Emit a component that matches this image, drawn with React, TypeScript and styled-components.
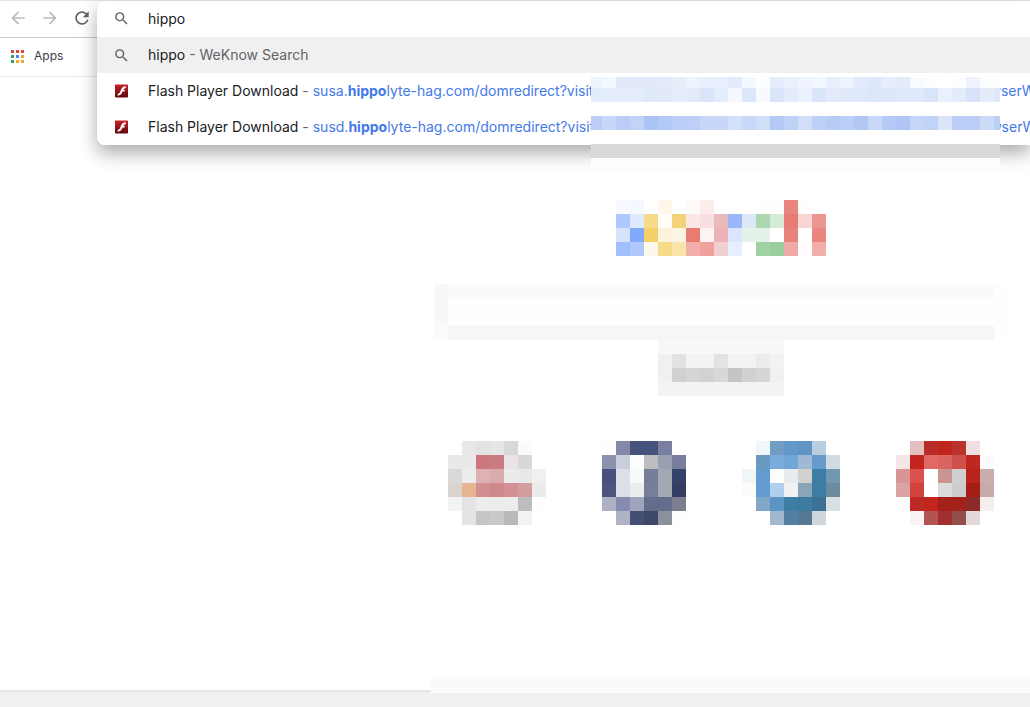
import React, { useState } from "react";
import styled, { createGlobalStyle } from "styled-components";
import { MdArrowBack, MdArrowForward, MdRefresh, MdSearch } from "react-icons/md";

const GlobalStyle = createGlobalStyle`
  *, *::before, *::after { box-sizing: border-box; }
  body {
    margin: 0;
    background: #fff;
    color: #202124;
    font-family: Inter, "Liberation Sans", sans-serif;
    font-size: 14px;
    overflow-x: hidden;
  }
`;

const Page = styled.div`
  display: flex;
  flex-direction: column;
  min-height: 100vh;
`;

const Chrome = styled.header`
  position: relative;
  border-top: 1px solid #e4e4e6;
`;

const Toolbar = styled.nav`
  display: flex;
  align-items: center;
  gap: 12px;
  height: 37px;
  padding: 0 0 2px 8px;
  border-bottom: 1px solid #c9cacb;
`;

const ToolButton = styled.button<{ $active?: boolean }>`
  display: flex;
  padding: 0;
  border: 0;
  background: none;
  color: ${(p) => (p.$active ? "#5f6368" : "#bababa")};
`;

const Bookmarks = styled.div`
  display: flex;
  align-items: center;
  height: 39px;
  padding: 0 0 2px 11px;
  border-bottom: 1px solid #ebebec;
`;

const AppsLink = styled.a`
  display: flex;
  align-items: center;
  gap: 10px;
  color: #3c4043;
  font-size: 12px;
  line-height: 16px;
  text-decoration: none;
`;

const Omnibox = styled.div`
  position: absolute;
  top: 0;
  left: 97px;
  right: 0;
  z-index: 1;
  border-radius: 8px 0 0 8px;
  background: #fff;
  box-shadow: 0 8px 18px rgba(32, 33, 36, 0.38);
`;

const Field = styled.label`
  display: flex;
  align-items: center;
  gap: 18px;
  height: 36px;
  padding: 0 0 2px 16px;
  color: #5f6368;
`;

const FieldInput = styled.input`
  flex: 1;
  min-width: 0;
  padding: 0;
  border: 0;
  outline: 0;
  background: none;
  color: #202124;
  font: inherit;
`;

const Suggestions = styled.ul`
  margin: 0;
  padding: 0;
  list-style: none;
`;

const Suggestion = styled.a<{ $selected?: boolean }>`
  display: flex;
  align-items: center;
  gap: 18px;
  height: 36px;
  padding-left: 16px;
  overflow: hidden;
  border-radius: ${(p) => (p.$selected ? "0" : "0 0 0 8px")};
  background: ${(p) => (p.$selected ? "#f0f0f0" : "#fff")};
  color: #5f6368;
  line-height: 18px;
  text-decoration: none;
  white-space: nowrap;
`;

const IconSlot = styled.span`
  display: flex;
  flex: 0 0 17px;
`;

const Label = styled.span`
  flex: 0 0 443px;
`;

const Title = styled.span`
  color: #202124;
`;

const Url = styled.span`
  color: #4479e8;
  b { font-weight: 700; }
`;

const UrlTail = styled(Url)`
  margin-left: 378px;
`;

const Redaction = styled.div`
  position: absolute;
  top: 76px;
  left: 494px;
`;

const MosaicSvg = styled.svg`
  display: block;
  flex: none;
`;

const Main = styled.main`
  display: flex;
  flex: 1;
  flex-direction: column;
  align-items: center;
  width: 574px;
  margin-left: 434px;
  padding-top: 123px;
`;

const SearchBox = styled.div`
  margin-top: 28px;
`;

const Tiles = styled.div`
  display: flex;
  gap: 56px;
  margin-top: 45px;
`;

const Footer = styled.footer`
  position: relative;
  height: 17px;
  border-top: 2px solid #e6e6e6;
  background: #f0f0f0;
`;

const FooterPatch = styled.div`
  position: absolute;
  top: -13px;
  left: 431px;
  right: 0;
  height: 14px;
  background: #fafafa;
`;

const CELL = 14;

type MosaicProps = { rows: string[]; label: string };

/* Each row is a space separated list of hex colours; "-" leaves a cell empty. */
function Mosaic({ rows, label }: MosaicProps) {
  const grid = rows.map((row) => row.split(" "));
  const width = Math.max(...grid.map((r) => r.length)) * CELL;
  const height = grid.length * CELL;
  return (
    <MosaicSvg width={width} height={height} role="img" aria-label={label} shapeRendering="crispEdges">
      {grid.map((row, y) =>
        row.map((c, x) =>
          c === "-" ? null : (
            <rect key={`${x}-${y}`} x={x * CELL} y={y * CELL} width={CELL} height={CELL} fill={`#${c}`} />
          )
        )
      )}
    </MosaicSvg>
  );
}

const redactedRows = [
  {
    y: 0,
    h: 11,
    colors:
      "eef4fe f4f8ff e1e9fb e1e9fb e1e9fb e4ecfc e6eefc eef3fe e8effd e8effd e3eafc f4f8ff fdfeff e6eefd eaf0fd eef3fe f3f7ff e9effd edf3fe e2eafb dfe8fb e6edfc e4ebfb f8fbff fcfdff ffffff fbfdff eef2fd fcfdff fcfdff",
  },
  {
    y: 11,
    h: 14,
    colors:
      "e3ecfb e4edfb e5ecfb e5ecfb e0e9fa e1e9fa e5ecfb e3ebfb dbe5fa e3edfb f5f8ff dce7fc f8faff dae5f9 e4ecfb ecf1fe dbe5fa e4eafb e0e8fa e0e9fb dde7fa dfe8fa e0e9fb e0e8fb d9e4f8 eaf1fc e4ecfb d8e3f9 e4ecfb dfe8fb",
  },
  {
    y: 39,
    h: 14,
    colors:
      "b9cdf6 c6d7f8 b9cdf7 c2d3f7 abc3f5 b4caf6 bacdf7 bdcff8 c6d7f8 c6d7f9 d3e0f9 c8d8f8 d0dff8 b3caf5 bed1f7 d0def8 bdd0f7 b7ccf5 bbcef7 b1c8f4 c7d8f8 b5caf6 afc6f4 c4d5f7 c0d3f8 dae5fa bacef9 b9cdf6 cbdaf7 bbcef7",
  },
];

function RedactedUrls() {
  return (
    <Redaction>
      <MosaicSvg width={409} height={95} shapeRendering="crispEdges" aria-hidden="true">
        <rect width={409} height={67} fill="#fff" />
        {redactedRows.map((row) =>
          row.colors.split(" ").map((c, i) => (
            <rect
              key={`${row.y}-${i}`}
              x={i === 0 ? 0 : 11 + (i - 1) * CELL}
              y={row.y}
              width={i === 0 ? 11 : CELL}
              height={row.h}
              fill={`#${c}`}
            />
          ))
        )}
        <rect y={67} width={409} height={14} fill="#d9dbda" />
        <rect y={81} width={409} height={14} fill="#fdfdfd" />
      </MosaicSvg>
    </Redaction>
  );
}

const appColors = [
  "#e94335", "#e94335", "#e94335",
  "#35a152", "#4285f4", "#f5a623",
  "#35a152", "#f5a623", "#f5a623",
];

function AppsIcon() {
  return (
    <svg width="13" height="13" shapeRendering="crispEdges" aria-hidden="true">
      {appColors.map((c, i) => (
        <rect key={i} x={(i % 3) * 5} y={Math.floor(i / 3) * 5} width="3" height="3" fill={c} />
      ))}
    </svg>
  );
}

function FlashIcon() {
  return (
    <svg width="16" height="14" viewBox="-1 0 16 14" aria-hidden="true">
      <defs>
        <linearGradient id="flash" x1="0" y1="0" x2="0" y2="1">
          <stop offset="0" stopColor="#c9202a" />
          <stop offset="1" stopColor="#5c080c" />
        </linearGradient>
      </defs>
      <rect x="1" y="0.5" width="13" height="13" rx="0.8" fill="url(#flash)" />
      <path
        d="M11.8 2.200v2c-1.4 0-2 .5-2.5 1.500h1.400v1.800H8.500c-.9 2.500-2 4.100-4.800 4.200v-2c1.800-.2 2.300-1.600 3-3.300C7.600 4 8.800 2.200 11.800 2.200z"
        fill="#fff"
      />
    </svg>
  );
}

const logoRows = [
  "f8faff f5f9ff - fff7ea - fffafa fdecec - - - fefefe fbfefb e9857e fffdfe -",
  "afc8fd dfe9ff f6da89 fffdf6 f3d377 fbe8e6 f9e0e0 ebbabd 9ab7fb dce8f8 acd7b2 d6ead8 e57c75 f9d5d4 ec9690",
  "d5e3fc 80aafc f4d069 fdf3dc fdf4e3 e87c72 fff4f4 ebb3b6 dbe5ff e5f2e7 e5f2e7 fff e9827b fff ea857f",
  "a1bffd afc9fd fdf8ed f6dc89 f9e4aa f2aeab efa19c f0d0d0 e7eeff - 9fd1a5 9ccf9f efaaa8 fffdfe f1aeaa",
];

const wide = (first: string, rest: string, last: string) => [first, ...Array(39).fill(rest), last].join(" ");
const searchRows = [
  wide("f8f8f8", "fafafa", "fefefe"),
  wide("f8f8f8", "fefefe", "fdfdfd"),
  wide("f8f8f8", "fefefe", "fdfdfd"),
  wide("fbfbfb", "f6f6f6", "fefefe"),
];

const buttonRows = [
  "f8f8f8 f8f8f8 f8f8f8 f8f8f8 f8f8f8 f8f8f8 f8f8f8 f8f8f8 f8f8f8",
  "f0f0f0 e2e2e2 f3f3f3 f3f3f3 e3e3e3 f3f3f3 f3f3f3 ececec f2f2f2",
  "f0f0f0 d1d1d1 d5d5d5 d2d2d2 d8d8d8 c5c5c5 d1d1d1 d6d6d6 f0f0f0",
  "f3f3f3 f3f3f3 f3f3f3 f3f3f3 f3f3f3 f3f3f3 f3f3f3 f3f3f3 f3f3f3",
];

const tiles = [
  {
    label: "Shortcut 1",
    rows: [
      "- e8e8e8 e3e3e3 e6e6e6 d8d8d8 fafafa -",
      "e9e9e9 e9e9e9 cb777d ca7b80 e9e3e5 d8d8d8 -",
      "d9d9d9 ececec dcb2b5 d9abad ebebeb e9e9e9 f0f0f0",
      "dbd3ce e7b391 d28e91 ce888b d59094 d39c9f ebebeb",
      "f3f3f3 e4e4e4 ececec ececec ececec bdbdbd fefefe",
      "- e4e4e4 c6c6c6 c9c9c9 b9b9b9 f2f2f2 -",
    ],
  },
  {
    label: "Shortcut 2",
    rows: [
      "fefefe 8288a6 48527f 48527f 787f9f -",
      "8c91ae cacddc fdfdfe bcbdc1 9b9fb3 777d9c",
      "48517e dddfe8 f7f9fa 757d98 a4a8b3 354269",
      "4d5480 dddfe8 ebedf0 767e98 a4a8b3 333d64",
      "aeb1c4 868caf a0a5bd 646e8b 646e8b 7b7f91",
      "- b0b3c3 454e75 3d4767 8b909c fefefe",
    ],
  },
  {
    label: "Shortcut 3",
    rows: [
      "- f1f6f9 719dc2 6098c8 6094c3 bacddf -",
      "- 6998c0 7aacdd 70a6d7 9fb9d4 669bcc d1dbe4",
      "f0f5f8 629bcf fcfdff e8ecef d1d1d1 3d7ca3 7297b1",
      "f9fbfc 629bcf b0cfec f1f1f1 88a6b6 3d7ca3 6c8b9e",
      "- 80a7c8 5a95c4 3e7ea4 3d7ba1 3b7195 d7dfe3",
      "- - a2b8cf 5280a2 567993 cfd6dc -",
    ],
  },
  {
    label: "Shortcut 4",
    rows: [
      "- e4c0c2 b92d27 c1261d b9342d f1dfe1 -",
      "f4e7e8 c4241e e06965 d96460 d0514b bf2720 fcfafb",
      "d79594 da514d fff c99494 cfcfcf b9231b caaeac",
      "dba4a4 d2433b fff dbdbdb cdcdcd a41e18 c7abab",
      "fdfcfd bd2a23 c1251b a3201b a3201b 8d2b29 f4eeee",
      "- f9f3f4 b35451 a02f2d 934e4b e3d8da -",
    ],
  },
];

const flashHosts = ["susa.", "susd."];

export default function App() {
  const [query, setQuery] = useState("hippo");
  return (
    <Page>
      <GlobalStyle />
      <Chrome>
        <Toolbar aria-label="Navigation">
          <ToolButton aria-label="Back"><MdArrowBack size={20} /></ToolButton>
          <ToolButton aria-label="Forward"><MdArrowForward size={20} /></ToolButton>
          <ToolButton aria-label="Reload" $active><MdRefresh size={20} /></ToolButton>
        </Toolbar>
        <Bookmarks>
          <AppsLink href="#apps"><AppsIcon />Apps</AppsLink>
        </Bookmarks>
        <Omnibox>
          <Field>
            <IconSlot><MdSearch size={17} /></IconSlot>
            <FieldInput aria-label="Address and search bar" value={query} onChange={(e) => setQuery(e.target.value)} />
          </Field>
          <Suggestions>
            <li>
              <Suggestion href="#search" $selected>
                <IconSlot><MdSearch size={17} /></IconSlot>
                <span><Title>hippo</Title> - WeKnow Search</span>
              </Suggestion>
            </li>
            {flashHosts.map((host) => (
              <li key={host}>
                <Suggestion href="#flash">
                  <IconSlot><FlashIcon /></IconSlot>
                  <Label>
                    <Title>Flash Player Download</Title> - <Url>{host}<b>hippo</b>lyte-hag.com/domredirect?visit</Url>
                  </Label>
                  <UrlTail>wserW</UrlTail>
                </Suggestion>
              </li>
            ))}
          </Suggestions>
          <RedactedUrls />
        </Omnibox>
      </Chrome>
      <Main>
        <Mosaic rows={logoRows} label="Search logo" />
        <SearchBox><Mosaic rows={searchRows} label="Search box" /></SearchBox>
        <Mosaic rows={buttonRows} label="Search button" />
        <Tiles>
          {tiles.map((t) => <Mosaic key={t.label} rows={t.rows} label={t.label} />)}
        </Tiles>
      </Main>
      <Footer><FooterPatch /></Footer>
    </Page>
  );
}
